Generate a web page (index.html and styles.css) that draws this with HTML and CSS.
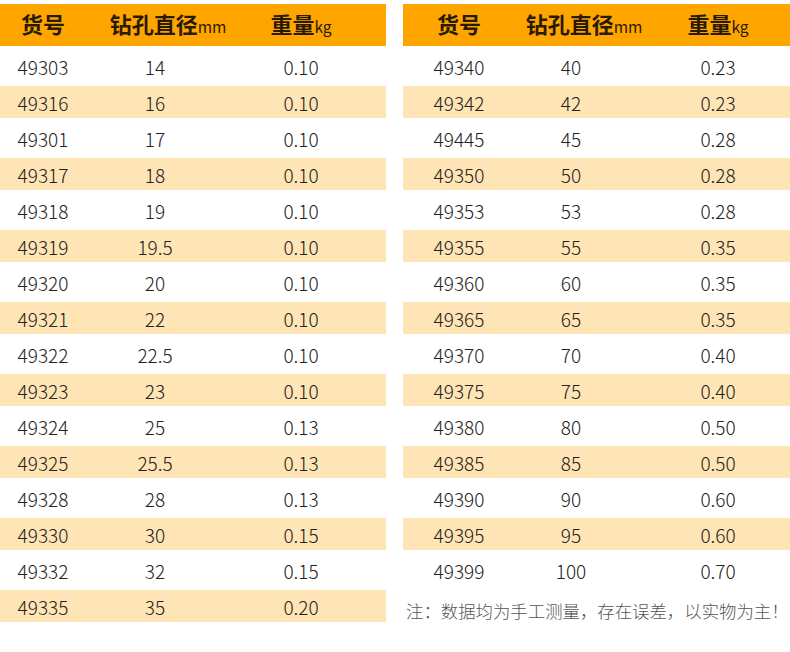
FILE: index.html
```html
<!DOCTYPE html>
<html lang="zh">
<head>
<meta charset="utf-8">
<title>钻孔直径重量表</title>
<link rel="stylesheet" href="styles.css">
</head>
<body>
<div class="page">
  <div class="table left">
    <div class="row head">
      <div class="c1">货号</div><div class="c2"><span class="hx">钻孔直径<small>mm</small></span></div><div class="c3"><span class="hx">重量<small>kg</small></span></div>
    </div>
    <div class="row"><div class="c1">49303</div><div class="c2">14</div><div class="c3">0.10</div></div>
    <div class="row band"><div class="c1">49316</div><div class="c2">16</div><div class="c3">0.10</div></div>
    <div class="row"><div class="c1">49301</div><div class="c2">17</div><div class="c3">0.10</div></div>
    <div class="row band"><div class="c1">49317</div><div class="c2">18</div><div class="c3">0.10</div></div>
    <div class="row"><div class="c1">49318</div><div class="c2">19</div><div class="c3">0.10</div></div>
    <div class="row band"><div class="c1">49319</div><div class="c2">19.5</div><div class="c3">0.10</div></div>
    <div class="row"><div class="c1">49320</div><div class="c2">20</div><div class="c3">0.10</div></div>
    <div class="row band"><div class="c1">49321</div><div class="c2">22</div><div class="c3">0.10</div></div>
    <div class="row"><div class="c1">49322</div><div class="c2">22.5</div><div class="c3">0.10</div></div>
    <div class="row band"><div class="c1">49323</div><div class="c2">23</div><div class="c3">0.10</div></div>
    <div class="row"><div class="c1">49324</div><div class="c2">25</div><div class="c3">0.13</div></div>
    <div class="row band"><div class="c1">49325</div><div class="c2">25.5</div><div class="c3">0.13</div></div>
    <div class="row"><div class="c1">49328</div><div class="c2">28</div><div class="c3">0.13</div></div>
    <div class="row band"><div class="c1">49330</div><div class="c2">30</div><div class="c3">0.15</div></div>
    <div class="row"><div class="c1">49332</div><div class="c2">32</div><div class="c3">0.15</div></div>
    <div class="row band"><div class="c1">49335</div><div class="c2">35</div><div class="c3">0.20</div></div>
  </div>
  <div class="table right">
    <div class="row head">
      <div class="c1">货号</div><div class="c2"><span class="hx">钻孔直径<small>mm</small></span></div><div class="c3"><span class="hx">重量<small>kg</small></span></div>
    </div>
    <div class="row"><div class="c1">49340</div><div class="c2">40</div><div class="c3">0.23</div></div>
    <div class="row band"><div class="c1">49342</div><div class="c2">42</div><div class="c3">0.23</div></div>
    <div class="row"><div class="c1">49445</div><div class="c2">45</div><div class="c3">0.28</div></div>
    <div class="row band"><div class="c1">49350</div><div class="c2">50</div><div class="c3">0.28</div></div>
    <div class="row"><div class="c1">49353</div><div class="c2">53</div><div class="c3">0.28</div></div>
    <div class="row band"><div class="c1">49355</div><div class="c2">55</div><div class="c3">0.35</div></div>
    <div class="row"><div class="c1">49360</div><div class="c2">60</div><div class="c3">0.35</div></div>
    <div class="row band"><div class="c1">49365</div><div class="c2">65</div><div class="c3">0.35</div></div>
    <div class="row"><div class="c1">49370</div><div class="c2">70</div><div class="c3">0.40</div></div>
    <div class="row band"><div class="c1">49375</div><div class="c2">75</div><div class="c3">0.40</div></div>
    <div class="row"><div class="c1">49380</div><div class="c2">80</div><div class="c3">0.50</div></div>
    <div class="row band"><div class="c1">49385</div><div class="c2">85</div><div class="c3">0.50</div></div>
    <div class="row"><div class="c1">49390</div><div class="c2">90</div><div class="c3">0.60</div></div>
    <div class="row band"><div class="c1">49395</div><div class="c2">95</div><div class="c3">0.60</div></div>
    <div class="row"><div class="c1">49399</div><div class="c2">100</div><div class="c3">0.70</div></div>
    <div class="note">注：数据均为手工测量，存在误差，以实物为主！</div>
  </div>
</div>
</body>
</html>
```

FILE: styles.css
```css
html, body {
  margin: 0;
  padding: 0;
  background: #ffffff;
}
body {
  width: 790px;
  height: 652px;
  overflow: hidden;
  font-family: "Noto Sans CJK SC", "Noto Sans", sans-serif;
  color: #222222;
}
.page {
  display: flex;
  gap: 17px;
  padding-top: 4px;
}
.table {
  display: flex;
  flex-direction: column;
  gap: 4px;
}
.left { width: 386px; }
.right { width: 387px; }
.row {
  display: grid;
  height: 32px;
  align-items: center;
  font-size: 19px;
  font-weight: 300;
  line-height: 1;
  text-align: center;
}
.left .row { grid-template-columns: 86px 138px 1fr; }
.right .row { grid-template-columns: 112px 112px 1fr; }
.left .c3 { padding-right: 8px; }
.right .c3 { padding-left: 19px; }
.band { background: #ffe4b5; }
.head {
  height: 42px;
  padding-bottom: 4px;
  box-sizing: border-box;
  background: #ffa500;
  font-size: 22px;
  font-weight: 700;
  color: #2a1a00;
}
.head .c2,
.head .c3 {
  display: flex;
  justify-content: center;
  min-width: 0;
}
.hx {
  white-space: nowrap;
}
.head small {
  font-size: 15.5px;
  font-weight: 400;
}
.head .c2 { padding-left: 26px; }
.note {
  margin-top: 9px;
  font-size: 17.4px;
  font-weight: 300;
  line-height: 24px;
  color: #555555;
  padding-left: 3px;
  white-space: nowrap;
}
```
